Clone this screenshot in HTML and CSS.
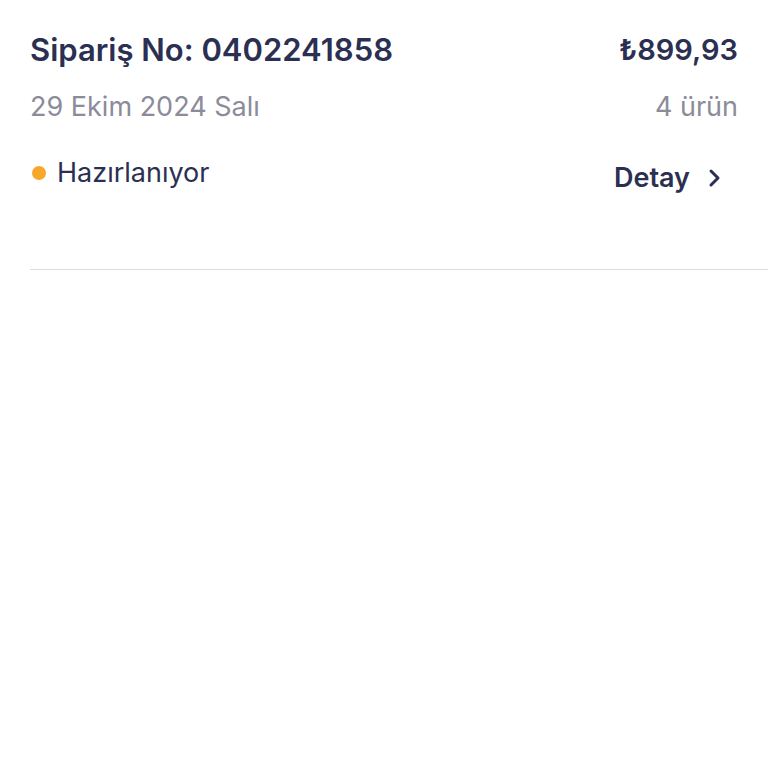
FILE: index.html
```html
<!DOCTYPE html>
<html>
<head>
  <title>Siparişlerim</title>
  <link rel="stylesheet" href="styles.css">
</head>
<body>
  <div class="order">
    <div class="row">
      <div class="order-no">Sipariş No: 0402241858</div>
      <div class="price">₺899,93</div>
    </div>
    <div class="row sub">
      <div class="date">29 Ekim 2024 Salı</div>
      <div class="count">4 ürün</div>
    </div>
    <div class="row status-row">
      <div class="status"><span class="dot"></span>Hazırlanıyor</div>
      <a class="detail" href="#">Detay
        <svg width="14" height="20" viewBox="0 0 14 20"><path d="M3 3 L10 10 L3 17" fill="none" stroke="#2b3052" stroke-width="3" stroke-linecap="round" stroke-linejoin="round"/></svg>
      </a>
    </div>
  </div>
</body>
</html>
```

FILE: styles.css
```css
body {
  margin: 0;
  font-family: Inter, "Liberation Sans", sans-serif;
  background: #fff;
  color: #2b3052;
}

.order {
  margin-left: 30px;
  padding: 30px 30px 0 0;
  height: 239px;
  border-bottom: 1px solid #dcdcdf;
}

.row {
  display: flex;
  justify-content: space-between;
  align-items: center;
}

.order-no, .price {
  font-size: 29px;
  font-weight: 600;
  line-height: 40px;
}

.order-no {
  font-size: 31px;
}

.sub {
  margin-top: 21px;
  color: #8b8b9a;
  font-size: 27px;
  line-height: 32px;
}

.status-row {
  margin-top: 28px;
}

.status {
  display: flex;
  align-items: center;
  font-size: 27px;
  line-height: 34px;
}

.dot {
  width: 14px;
  height: 14px;
  border-radius: 50%;
  background: #f7a82a;
  margin: 0 11px 0 2px;
}

.detail {
  display: flex;
  align-items: center;
  gap: 18px;
  margin: 10px 16px 0 0;
  color: #2b3052;
  text-decoration: none;
  font-size: 27px;
  font-weight: 600;
}
```
